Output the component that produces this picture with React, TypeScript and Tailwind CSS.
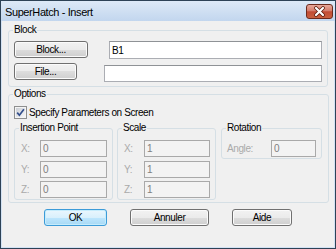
import React from "react";

function Btn({ cls, children }: { cls: string; children: React.ReactNode }) {
  return (
    <button
      type="button"
      className={
        "h-[17px] rounded-[3px] border flex items-center justify-center leading-[12px] " + cls
      }
    >
      {children}
    </button>
  );
}

const normalBtn =
  "border-[#707070] bg-[linear-gradient(to_bottom,#f2f2f2,#ebebeb_50%,#dddddd_50%,#cfcfcf)] shadow-[inset_0_0_0_1px_#fbfbfb]";
const defaultBtn =
  "border-[#3c9bd8] bg-[linear-gradient(to_bottom,#eaf6fd,#d9f0fc_50%,#bee6fd_50%,#a7d9f5)] shadow-[inset_0_0_0_1px_#c5ecfc]";

function Field({ label, value, inputCls }: { label: string; value: string; inputCls: string }) {
  return (
    <div className="flex items-center h-[17px]">
      <span className="ml-[2px] w-[19px] text-[#aaaaaa] leading-[12px]">{label}</span>
      <input
        disabled
        readOnly
        value={value}
        className={
          "h-[17px] border border-[#a9a9a9] bg-[#f3f3f3] text-[#808080] pl-[2px] leading-[15px] " + inputCls
        }
      />
    </div>
  );
}

export default function App() {
  return (
    <div className="w-[336px] h-[249px] border border-[#2d4256] bg-[#d3e2f3] flex flex-col font-['Liberation_Sans',Arial,sans-serif] text-[10px] tracking-[-0.4px] text-black">
      {/* title bar */}
      <div className="h-[20px] flex items-start shrink-0 bg-[linear-gradient(to_bottom,#dde9f7,#c2d6ee)]">
        <span className="ml-[4px] mt-[5px] text-[11px] leading-[13px]">SuperHatch - Insert</span>
        <span className="ml-auto mt-[3px] mr-[2px] w-[27px] h-[15px] rounded-[3px] border border-[#6d2a1d] bg-[linear-gradient(to_bottom,#e9a99b,#d47d6c_45%,#c24b34_52%,#c9603f)] flex items-center justify-center">
          <svg width="25" height="13" viewBox="0 0 25 13">
            <path d="M9 3 L16 10 M16 3 L9 10" stroke="#5a1a0c" strokeWidth="3.8" strokeLinecap="round" />
            <path d="M9 3 L16 10 M16 3 L9 10" stroke="#ffffff" strokeWidth="2.2" strokeLinecap="round" />
          </svg>
        </span>
      </div>

      {/* client */}
      <div className="flex-1 mx-[1px] mb-[1px] bg-[#f0f0f0] flex flex-col">
        {/* Block group */}
        <fieldset className="ml-[6px] mt-[3px] w-[320px] border border-[#d5dfe5] rounded-[3px] px-[4px] pb-[4px]">
          <legend className="px-[1px] leading-[12px]">Block</legend>
          <div className="flex items-start mt-[5px]">
            <Btn cls={"ml-[1px] w-[74px] " + normalBtn}>Block...</Btn>
            <input
              readOnly
              value="B1"
              className="ml-[21px] w-[213px] h-[18px] border border-[#abadb3] border-t-[#8f9296] bg-white pl-[2px] leading-[16px]"
            />
          </div>
          <div className="flex items-start mt-[4px]">
            <Btn cls={"ml-[1px] w-[63px] " + normalBtn}>File...</Btn>
            <input
              readOnly
              value=""
              className="ml-[27px] mt-[2px] w-[218px] h-[17px] border border-[#abadb3] border-t-[#8f9296] bg-white pl-[2px]"
            />
          </div>
        </fieldset>

        {/* Options group */}
        <fieldset className="ml-[6px] mt-[1px] w-[321px] border border-[#d5dfe5] rounded-[3px] px-[4px] pb-[2px]">
          <legend className="px-[1px] leading-[12px]">Options</legend>
          <div className="flex items-center mt-[6px] ml-[1px] h-[13px]">
            <svg width="13" height="13" viewBox="0 0 13 13">
              <defs>
                <linearGradient id="cb" x1="0" y1="0" x2="1" y2="1">
                  <stop offset="0" stopColor="#cbcfd5" />
                  <stop offset="1" stopColor="#f7f7f7" />
                </linearGradient>
              </defs>
              <rect x="0.5" y="0.5" width="12" height="12" fill="#f4f4f4" stroke="#8e8f8f" />
              <rect x="2" y="2" width="9" height="9" fill="url(#cb)" />
              <path d="M3.2 6.6 L5.4 9.2 L9.9 3.2" fill="none" stroke="#334f8c" strokeWidth="1.7" />
            </svg>
            <span className="ml-[2px] leading-[12px]">Specify Parameters on Screen</span>
          </div>

          <div className="flex items-start mt-[3px] ml-[1px]">
            <fieldset className="w-[99px] border border-[#d5dfe5] rounded-[3px] px-[4px] pb-[1px]">
              <legend className="px-[1px] leading-[12px]">Insertion Point</legend>
              <div className="mt-[6px] flex flex-col">
                <Field label="X:" value="0" inputCls="w-[67px]" />
                <div className="mt-[4px]">
                  <Field label="Y:" value="0" inputCls="w-[67px]" />
                </div>
                <div className="mt-[3px]">
                  <Field label="Z:" value="0" inputCls="w-[67px]" />
                </div>
              </div>
            </fieldset>

            <fieldset className="ml-[4px] w-[99px] border border-[#d5dfe5] rounded-[3px] px-[4px] pb-[1px]">
              <legend className="px-[1px] leading-[12px]">Scale</legend>
              <div className="mt-[6px] flex flex-col">
                <Field label="X:" value="1" inputCls="w-[66px] ml-[1px]" />
                <div className="mt-[4px]">
                  <Field label="Y:" value="1" inputCls="w-[66px] ml-[1px]" />
                </div>
                <div className="mt-[3px]">
                  <Field label="Z:" value="1" inputCls="w-[66px] ml-[1px]" />
                </div>
              </div>
            </fieldset>

            <fieldset className="ml-[5px] w-[101px] border border-[#d5dfe5] rounded-[3px] px-[4px] pb-[1px]">
              <legend className="px-[1px] leading-[12px]">Rotation</legend>
              <div className="mt-[6px] flex items-center h-[17px]">
                <span className="ml-[1px] w-[44px] text-[#aaaaaa] leading-[12px]">Angle:</span>
                <input
                  disabled
                  readOnly
                  value="0"
                  className="w-[45px] h-[17px] border border-[#a9a9a9] bg-[#f3f3f3] text-[#808080] pl-[2px] leading-[15px]"
                />
              </div>
            </fieldset>
          </div>
        </fieldset>

        {/* buttons */}
        <div className="flex items-start mt-[6px] ml-[42px] gap-[23px]">
          <Btn cls={"w-[63px] " + defaultBtn}>OK</Btn>
          <Btn cls={"w-[79px] " + normalBtn}>Annuler</Btn>
          <Btn cls={"w-[60px] " + normalBtn}>Aide</Btn>
        </div>
      </div>
    </div>
  );
}
